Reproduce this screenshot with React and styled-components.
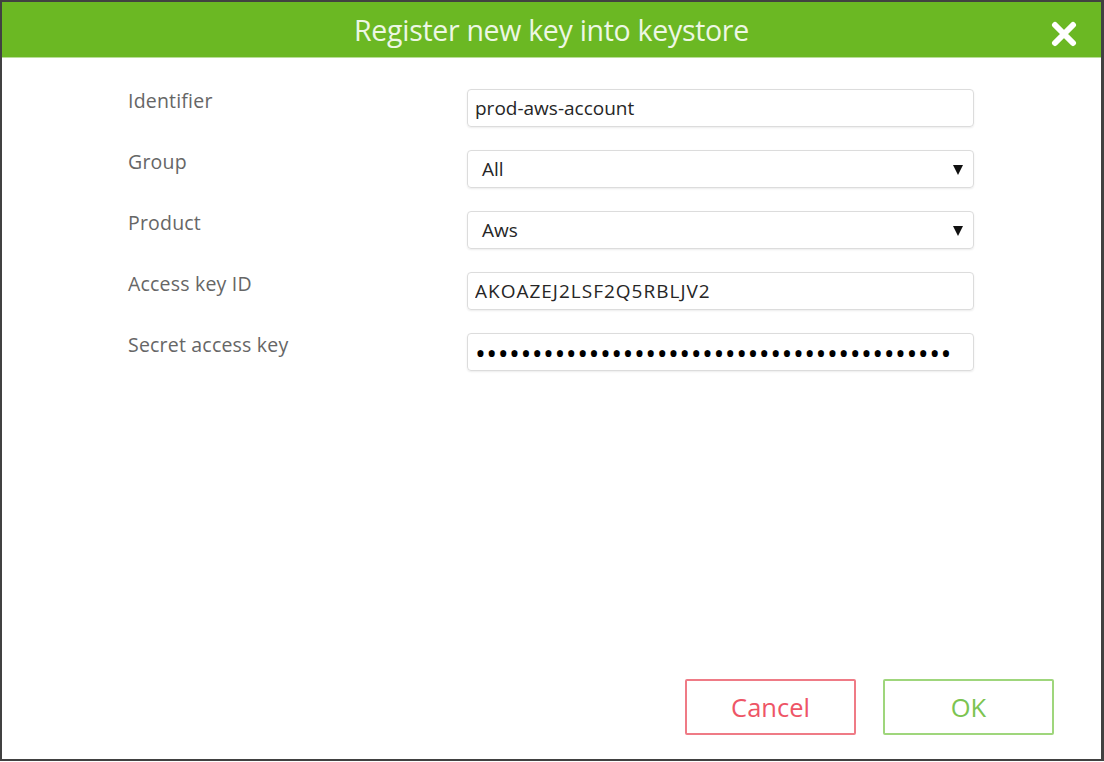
import React from 'react'
import styled, { createGlobalStyle } from 'styled-components'

const color = {
    frame: '#414141',
    header: '#6bb823',
    title: '#edf7e4',
    label: '#666666',
    text: '#262626',
    field: '#dcdcdc',
    cancel: '#ef7b86',
    cancelText: '#ee5566',
    ok: '#9fd67c',
    okText: '#7cc451',
}

const Global = createGlobalStyle`
    html, body {
        margin: 0;
        padding: 0;
        background: #ffffff;
    }
    body {
        font-family: "Open Sans", "Noto Sans", sans-serif;
    }
`

const Frame = styled.div`
    box-sizing: border-box;
    width: 1104px;
    height: 761px;
    border: 2px solid ${color.frame};
    border-right-width: 3px;
    display: flex;
    flex-direction: column;
    background: #ffffff;
`

const Header = styled.header`
    position: relative;
    height: 55px;
    flex-shrink: 0;
    background: ${color.header};
    border-bottom: 1px solid #b9de98;
    display: flex;
    align-items: center;
    justify-content: center;
    > h1 {
        margin: 0;
        font-size: 28.5px;
        font-weight: 400;
        letter-spacing: -0.3px;
        color: ${color.title};
    }
`

const Close = styled.button`
    position: absolute;
    right: 24px;
    top: 19px;
    width: 26px;
    height: 26px;
    padding: 0;
    border: none;
    background: none;
    cursor: pointer;
    > svg {
        display: block;
    }
`

const Form = styled.div`
    flex-grow: 1;
    display: grid;
    grid-template-columns: 339px 507px;
    grid-auto-rows: 38px;
    row-gap: 23px;
    align-content: start;
    padding: 31px 0 0 126px;
`

const Label = styled.label`
    font-size: 19.5px;
    letter-spacing: 0.2px;
    color: ${color.label};
    line-height: 24px;
`

const Field = styled.div`
    position: relative;
    box-sizing: border-box;
    height: 38px;
    border: 1px solid ${color.field};
    border-radius: 4px;
    box-shadow: 0 1px 2px rgba(0, 0, 0, 0.08);
    display: flex;
    align-items: center;
    padding-left: ${props => props.$select ? '14px' : '7px'};
    font-size: 19px;
    color: ${color.text};
    input {
        border: none;
        outline: none;
        padding: 0;
        margin: 0;
        width: 100%;
        background: transparent;
        font: inherit;
        color: inherit;
        letter-spacing: ${props => props.$wide ? '1px' : '0'};
    }
`

const Dots = styled.span`
    font-size: 29px;
    letter-spacing: 0.45px;
    color: #000000;
    line-height: 1;
`

const Arrow = styled.span`
    position: absolute;
    right: 10px;
    top: 14px;
    width: 0;
    height: 0;
    border-left: 5px solid transparent;
    border-right: 5px solid transparent;
    border-top: 10px solid #111111;
`

const Footer = styled.div`
    display: flex;
    justify-content: flex-end;
    gap: 27px;
    padding: 0 47px 24px 0;
`

const Button = styled.button`
    box-sizing: border-box;
    width: 171px;
    height: 56px;
    background: #ffffff;
    border: 2px solid ${props => props.$kind === 'cancel' ? color.cancel : color.ok};
    color: ${props => props.$kind === 'cancel' ? color.cancelText : color.okText};
    border-radius: 2px;
    font-family: inherit;
    font-size: 25.5px;
    cursor: pointer;
`

const TextRow = ({ label, value, wide }) => (
    <>
        <Label>{label}</Label>
        <Field $wide={wide}>
            <input readOnly value={value} />
        </Field>
    </>
)

const SelectRow = ({ label, value }) => (
    <>
        <Label>{label}</Label>
        <Field $select>
            {value}
            <Arrow />
        </Field>
    </>
)

export default function App() {
    const secret = '\u2022'.repeat(42)
    return (
        <Frame>
            <Global />
            <Header>
                <h1>Register new key into keystore</h1>
                <Close aria-label="Close">
                    <svg width="26" height="26" viewBox="0 0 26 26">
                        <path d="M4 4 L22 22 M22 4 L4 22" stroke="#ffffff" strokeWidth="6" strokeLinecap="round" />
                    </svg>
                </Close>
            </Header>
            <Form>
                <TextRow label="Identifier" value="prod-aws-account" />
                <SelectRow label="Group" value="All" />
                <SelectRow label="Product" value="Aws" />
                <TextRow label="Access key ID" value="AKOAZEJ2LSF2Q5RBLJV2" wide />
                <Label>Secret access key</Label>
                <Field>
                    <Dots>{secret}</Dots>
                </Field>
            </Form>
            <Footer>
                <Button $kind="cancel">Cancel</Button>
                <Button $kind="ok">OK</Button>
            </Footer>
        </Frame>
    )
}
